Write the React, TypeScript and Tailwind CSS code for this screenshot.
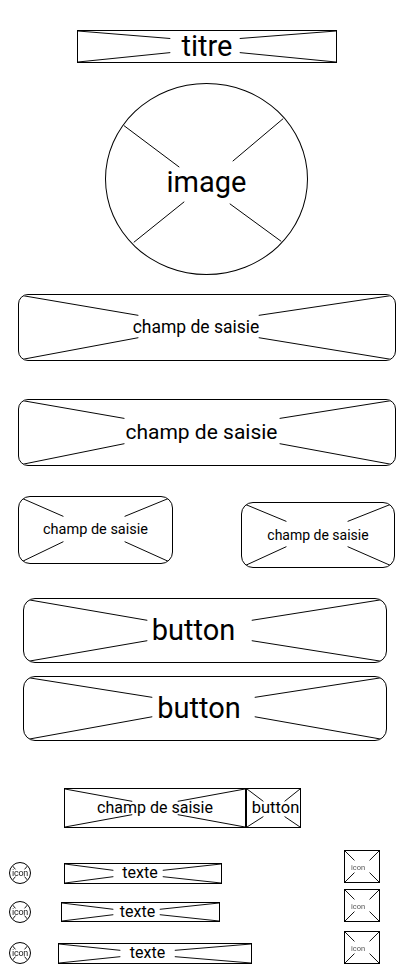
type Gap = { l: number; t: number; r: number; b: number }

// lines from the four corners towards the label area
function Cross({ w, h, g }: { w: number; h: number; g: Gap }) {
  return (
    <svg
      className="pointer-events-none absolute inset-0 h-full w-full"
      viewBox={`0 0 ${w} ${h}`}
      preserveAspectRatio="none"
    >
      <g stroke="#000" strokeWidth="1" fill="none">
        <line x1={0} y1={0} x2={g.l} y2={g.t} />
        <line x1={w} y1={0} x2={g.r} y2={g.t} />
        <line x1={0} y1={h} x2={g.l} y2={g.b} />
        <line x1={w} y1={h} x2={g.r} y2={g.b} />
      </g>
    </svg>
  )
}

interface WireBoxProps {
  w: number
  h: number
  g: Gap
  label: string
  className?: string
  textClass?: string
}

function WireBox({ w, h, g, label, className = '', textClass = '' }: WireBoxProps) {
  return (
    <div
      className={`relative flex shrink-0 items-center justify-center overflow-hidden border border-black bg-white ${className}`}
    >
      <Cross w={w} h={h} g={g} />
      <span className={`relative whitespace-nowrap leading-none ${textClass}`}>{label}</span>
    </div>
  )
}

function IconCircle() {
  return (
    <div className="relative ml-[9px] flex h-[22px] w-[22px] shrink-0 items-center justify-center overflow-hidden rounded-full border border-black">
      <Cross w={22} h={22} g={{ l: 6, t: 7, r: 16, b: 15 }} />
      <span className="relative transform-gpu text-[9px] leading-none tracking-tight text-[#222]">icon</span>
    </div>
  )
}

function IconSquare({ className = '' }: { className?: string }) {
  return (
    <WireBox
      className={`h-[33px] w-[36px] ${className}`}
      w={36}
      h={33}
      g={{ l: 10, t: 10, r: 26, b: 23 }}
      label="icon"
      textClass="transform-gpu pr-[8px] pt-[3px] text-[7.5px] text-[#555]"
    />
  )
}

export default function App() {
  return (
    <div className="flex min-h-[972px] w-[414px] flex-col items-start overflow-hidden bg-white font-['Roboto',sans-serif] text-black">
      {/* titre */}
      <WireBox
        className="ml-[77px] mt-[30px] h-[33px] w-[260px]"
        w={260}
        h={33}
        g={{ l: 93, t: 8, r: 163, b: 23 }}
        label="titre"
        textClass="text-[29px]"
      />

      {/* image */}
      <div className="relative ml-[105px] mt-[20px] flex h-[192px] w-[203px] items-center justify-center rounded-[50%] border border-black">
        <svg className="pointer-events-none absolute inset-0 h-full w-full" viewBox="0 0 203 192">
          <g stroke="#000" strokeWidth="1">
            <line x1={18} y1={42} x2={74} y2={84} />
            <line x1={179} y1={35} x2={128} y2={78} />
            <line x1={28} y1={160} x2={79} y2={119} />
            <line x1={177} y1={159} x2={125} y2={121} />
          </g>
        </svg>
        <span className="relative pt-[6px] text-[29px] leading-none">image</span>
      </div>

      {/* champs de saisie */}
      <WireBox
        className="ml-[18px] mt-[19px] h-[67px] w-[378px] rounded-[10px]"
        w={378}
        h={67}
        g={{ l: 120, t: 21, r: 241, b: 44 }}
        label="champ de saisie"
        textClass="pr-[22px] text-[17.5px]"
      />
      <WireBox
        className="ml-[18px] mt-[38px] h-[67px] w-[378px] rounded-[10px]"
        w={378}
        h={67}
        g={{ l: 106, t: 19, r: 262, b: 45 }}
        label="champ de saisie"
        textClass="pr-[11px] text-[21px]"
      />

      <div className="mt-[30px] flex items-start">
        <WireBox
          className="ml-[18px] h-[68px] w-[155px] rounded-[12px]"
          w={155}
          h={68}
          g={{ l: 45, t: 20, r: 107, b: 46 }}
          label="champ de saisie"
          textClass="text-[14.5px]"
        />
        <WireBox
          className="ml-[68px] mt-[6px] h-[66px] w-[154px] rounded-[12px]"
          w={154}
          h={66}
          g={{ l: 45, t: 19, r: 107, b: 45 }}
          label="champ de saisie"
          textClass="text-[14px]"
        />
      </div>

      {/* buttons */}
      <WireBox
        className="ml-[23px] mt-[30px] h-[65px] w-[364px] rounded-[12px]"
        w={364}
        h={65}
        g={{ l: 124, t: 22, r: 229, b: 43 }}
        label="button"
        textClass="pr-[23px] text-[29px]"
      />
      <WireBox
        className="ml-[23px] mt-[13px] h-[65px] w-[364px] rounded-[12px]"
        w={364}
        h={65}
        g={{ l: 129, t: 21, r: 232, b: 41 }}
        label="button"
        textClass="pr-[12px] text-[29px]"
      />

      {/* champ + button */}
      <div className="ml-[64px] mt-[47px] flex">
        <WireBox
          className="h-[40px] w-[182px]"
          w={182}
          h={40}
          g={{ l: 68, t: 13, r: 114, b: 27 }}
          label="champ de saisie"
          textClass="text-[16px]"
        />
        <WireBox
          className="h-[40px] w-[55px]"
          w={55}
          h={40}
          g={{ l: 17, t: 13, r: 39, b: 29 }}
          label="button"
          textClass="pl-[4px] text-[16.5px]"
        />
      </div>

      {/* icon rows */}
      <div className="mt-[22px] flex w-full items-start">
        <div className="flex flex-col pt-[12px]">
          <div className="flex items-center">
            <IconCircle />
            <WireBox
              className="ml-[33px] h-[21px] w-[158px]"
              w={158}
              h={21}
              g={{ l: 49, t: 7, r: 99, b: 14 }}
              label="texte"
              textClass="pr-[6px] text-[16px]"
            />
          </div>
          <div className="mt-[17px] flex items-center">
            <IconCircle />
            <WireBox
              className="ml-[30px] h-[20px] w-[159px]"
              w={159}
              h={20}
              g={{ l: 52, t: 7, r: 99, b: 13 }}
              label="texte"
              textClass="pr-[6px] text-[16px]"
            />
          </div>
          <div className="mt-[19px] flex items-center">
            <IconCircle />
            <WireBox
              className="ml-[27px] h-[21px] w-[194px]"
              w={194}
              h={21}
              g={{ l: 62, t: 7, r: 117, b: 14 }}
              label="texte"
              textClass="pr-[15px] text-[16px]"
            />
          </div>
        </div>
        <div className="ml-auto mr-[34px] flex flex-col">
          <IconSquare />
          <IconSquare className="mt-[6px]" />
          <IconSquare className="mt-[9px]" />
        </div>
      </div>
    </div>
  )
}
